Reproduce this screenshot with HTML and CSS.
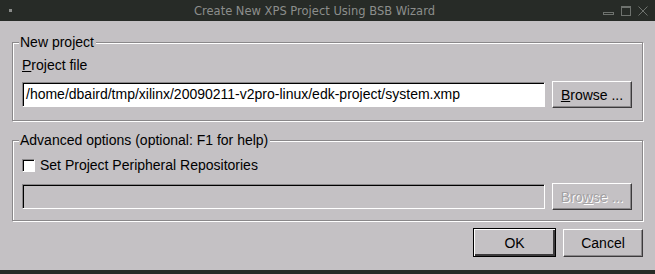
FILE: index.html
```html
<!DOCTYPE html>
<html lang="en">
<head>
    <meta charset="UTF-8">
    <title>Create New XPS Project Using BSB Wizard</title>
    <link rel="stylesheet" href="styles.css">
</head>
<body>

    <div class="titlebar">
        <div class="win-icon"></div>
        <div class="win-title">Create New XPS Project Using BSB Wizard</div>
        <div class="win-controls">
            <svg width="11" height="10" viewBox="0 0 11 10"><rect x="0.5" y="6.5" width="10" height="2" fill="none" stroke="#6e726e"/></svg>
            <svg width="10" height="10" viewBox="0 0 10 10"><rect x="0.5" y="0.5" width="9" height="9" fill="none" stroke="#6e726e"/><line x1="0" y1="1.5" x2="10" y2="1.5" stroke="#6e726e"/></svg>
            <svg width="10" height="10" viewBox="0 0 10 10"><path d="M0.5 0.5 L9.5 9.5 M9.5 0.5 L0.5 9.5" stroke="#6e726e" fill="none"/></svg>
        </div>
    </div>

    <div class="dialog">
        <fieldset class="group group-project">
            <legend>New project</legend>
            <div class="label"><u>P</u>roject file</div>
            <div class="row">
                <div class="entry">/home/dbaird/tmp/xilinx/20090211-v2pro-linux/edk-project/system.xmp</div>
                <button class="btn browse"><u>B</u>rowse ...</button>
            </div>
        </fieldset>

        <fieldset class="group group-advanced">
            <legend>Advanced options (optional: F1 for help)</legend>
            <label class="check-row">
                <span class="checkbox"></span>
                <span>Set Project Peripheral Repositories</span>
            </label>
            <div class="row">
                <div class="entry disabled"></div>
                <button class="btn browse disabled">Bro<u>w</u>se ...</button>
            </div>
        </fieldset>

        <div class="actions">
            <button class="btn ok">OK</button>
            <button class="btn cancel">Cancel</button>
        </div>
    </div>

    <div class="bottom-bar"></div>

</body>
</html>
```

FILE: styles.css
```css
* {
    margin: 0;
    padding: 0;
    box-sizing: border-box;
}

body {
    width: 655px;
    height: 274px;
    background: #c4c1c4;
    font-family: 'Liberation Sans', Arial, sans-serif;
    font-size: 14px;
    color: #000;
    display: flex;
    flex-direction: column;
    overflow: hidden;
}

/* window manager title bar */
.titlebar {
    height: 21px;
    background: #272b27;
    display: flex;
    align-items: center;
}

.win-icon {
    width: 3px;
    height: 3px;
    background: #8a8c8a;
    margin-left: 9px;
}

.win-title {
    flex: 1;
    text-align: center;
    font-family: 'DejaVu Sans', sans-serif;
    font-size: 11.5px;
    color: #8c8e8c;
    padding-left: 14px;
}

.win-controls {
    display: flex;
    gap: 7px;
    margin-right: 7px;
    align-items: center;
}

.win-controls svg {
    display: block;
}

/* dialog body */
.dialog {
    padding: 0 12px;
}

.group {
    border: 1px solid #8a888a;
    box-shadow: inset 1px 1px 0 #fff, 1px 1px 0 #fff;
    padding: 8px 10px 12px 9px;
}

.group legend {
    background: #c4c1c4;
    padding: 0 2px 0 1px;
    margin-left: -3px;
    line-height: 15px;
}

.group-project {
    margin-top: 14px;
}

.group-advanced {
    margin-top: 12px;
    padding-top: 9px;
    padding-bottom: 10px;
}

.label {
    line-height: 15px;
    margin-bottom: 8px;
}

.row {
    display: flex;
    align-items: center;
    gap: 7px;
}

.entry {
    flex: 1;
    height: 25px;
    background: #fff;
    border: 1px solid;
    border-color: #8a888a #fff #fff #8a888a;
    box-shadow: inset 1px 1px 0 #000;
    padding: 3px 3px 0;
    line-height: 17px;
    white-space: nowrap;
    overflow: hidden;
}

.entry.disabled {
    background: #c4c1c4;
}

.btn {
    font-family: inherit;
    font-size: 14px;
    color: #000;
    background: #c4c1c4;
    border: 1px solid;
    border-color: #fff #3c3a3c #3c3a3c #fff;
    box-shadow: inset -1px -1px 0 #8a888a;
    height: 27px;
}

.browse {
    width: 80px;
}

.btn.disabled {
    color: #a3a1a3;
    text-shadow: 1px 1px 0 #fff;
}

.check-row {
    display: flex;
    align-items: center;
    gap: 5px;
    line-height: 17px;
    margin-bottom: 9px;
}

.checkbox {
    width: 13px;
    height: 13px;
    background: #fff;
    border: 1px solid;
    border-color: #8a888a #fff #fff #8a888a;
    box-shadow: inset 1px 1px 0 #000;
}

.actions {
    display: flex;
    justify-content: flex-end;
    align-items: flex-start;
    gap: 7px;
    margin-top: 7px;
}

.ok {
    width: 83px;
    height: 29px;
    border-color: #000;
    box-shadow: inset 1px 1px 0 #fff, inset -2px -2px 0 #3c3a3c;
}

.cancel {
    width: 80px;
    height: 28px;
    margin-top: 1px;
}

.bottom-bar {
    margin-top: auto;
    height: 4px;
    background: #272b27;
}
```
